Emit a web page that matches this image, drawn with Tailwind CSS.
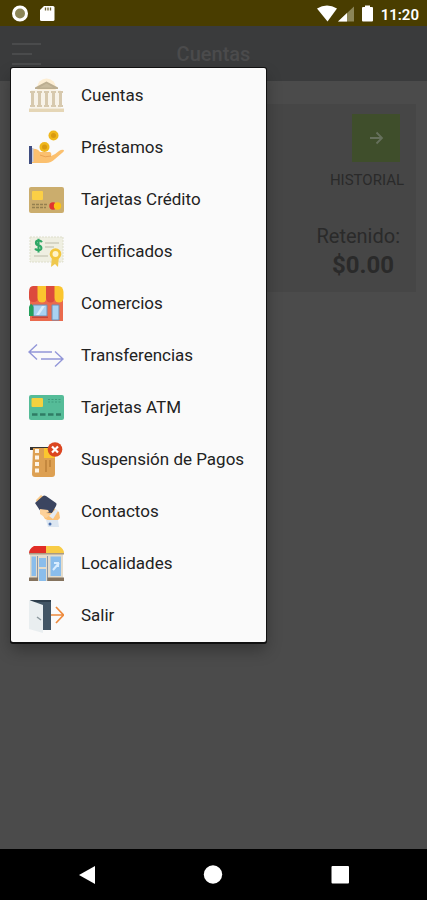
<!DOCTYPE html>
<html lang="es">

<head>
    <meta charset="UTF-8">
    <meta name="viewport" content="width=device-width, initial-scale=1.0">
    <title>Cuentas</title>
    <script src="https://cdn.jsdelivr.net/npm/@tailwindcss/browser@4"></script>
</head>

<body class="min-h-screen flex flex-col bg-[#4b4b4b] font-['Roboto',sans-serif] text-[#2a2a2a]">
    <!-- Status bar -->
    <div class="flex items-center justify-between h-[26px] px-2 bg-[#493d00] text-white">
        <div class="flex items-center gap-2 pl-1">
            <svg class="size-5" viewBox="0 0 20 20" aria-hidden="true">
                <circle cx="8" cy="10.500" r="6.500" fill="#8b8558" stroke="#fff" stroke-width="3" />
            </svg>
            <svg class="size-4" viewBox="0 0 16 16" aria-hidden="true">
                <path d="M4 1h9a1.500 1.500 0 0 1 1.500 1.500v12A1.500 1.500 0 0 1 13 16H1.500A1.500 1.500 0 0 1 0 14.500V5z" fill="#fff" />
                <path d="M5.500 2.500v3M8 2.500v3M10.500 2.500v3" stroke="#6b6130" stroke-width="1.300" />
            </svg>
        </div>
        <div class="flex items-center">
            <svg class="w-[60px] h-5" viewBox="0 0 60 20" aria-hidden="true">
                <path d="M0 5.500Q10-.5 20 5.500L10.500 18.500z" fill="#fff" />
                <path d="M37 3.500v15H21z" fill="#8b8558" />
                <path d="M30 10v8.500h-9z" fill="#fff" />
                <path d="M48 2.500h5v1.500h2a1 1 0 0 1 1 1v12.500a1 1 0 0 1-1 1h-9a1 1 0 0 1-1-1V5a1 1 0 0 1 1-1h2z" fill="#fff" />
            </svg>
            <span class="pl-1 pt-1 text-[15px] font-semibold">11:20</span>
        </div>
    </div>

    <div class="relative flex-1 flex flex-col">
        <!-- Title bar -->
        <header class="grid grid-cols-[1fr_auto_1fr] items-center h-[55px] px-3 bg-[#3a3b3c]">
            <button type="button" aria-label="Menú" class="justify-self-start">
                <svg class="w-[30px] h-6" viewBox="0 0 30 24" fill="none" stroke="#4a4b4c" stroke-width="2">
                    <path d="M0 2h29M0 12h20M0 22h29" />
                </svg>
            </button>
            <h1 class="text-xl font-medium text-[#4b4b4c]">Cuentas</h1>
        </header>

        <!-- Account card -->
        <main class="flex-1 pt-[23px] px-[11px]">
            <section class="flex flex-col items-end h-[188px] pt-[10px] px-3 bg-[#464646]">
                <button type="button" class="flex flex-col items-end text-[15px] leading-5">
                    <span class="flex items-center justify-center size-12 mr-1 mb-2 bg-[#3f4e2b]">
                        <svg class="size-4" viewBox="0 0 16 16" fill="none" stroke="#66705c" stroke-width="1.800" aria-hidden="true">
                            <path d="M2 8h12M8.500 2.500 14 8l-5.500 5.500" />
                        </svg>
                    </span>
                    HISTORIAL
                </button>
                <p class="pt-[34px] pr-1 text-xl leading-6">Retenido:</p>
                <p class="pt-px pr-[10px] text-2xl leading-8 font-bold">$0.00</p>
            </section>
        </main>

        <!-- Drop-down menu -->
        <nav class="absolute top-[42px] left-[11px] w-[255px] rounded-xs bg-[#fafafa] text-[#222] text-[17px] shadow-[0_0_0_1px_#111,0_1px_0_1px_#111,0_8px_16px_rgba(0,0,0,0.3)]">
            <ul class="pt-[2px]">
                <li>
                    <a href="#cuentas" class="flex items-center gap-[17px] h-[52px] pl-[17px]">
                        <svg class="size-9" viewBox="0 0 36 36" aria-hidden="true">
                            <circle cx="18.500" cy="10" r="9.500" fill="#fdeed4" />
                            <path d="M3 12h30v18H3z" fill="#f8f3e9" />
                            <path d="M18.500 3.500 7 9.500V11h23V9.500z" fill="#bcae91" />
                            <path d="m18.500 5.500-7 4h14z" fill="#c9bb9e" />
                            <g fill="#d7c9ae">
                                <path d="M2 13h5v2H2zM9 13h5v2H9zM16 13h5v2h-5zM23 13h5v2h-5zM30 13h5v2h-5z" />
                                <path d="M3 15h3v12H3zM10 15h3v12h-3zM17 15h3v12h-3zM24 15h3v12h-3zM31 15h3v12h-3z" />
                                <path d="M2 27h5v2H2zM9 27h5v2H9zM16 27h5v2h-5zM23 27h5v2h-5zM30 27h5v2h-5z" />
                            </g>
                            <path d="M1 30.500h35V34H1z" fill="#e5d6b6" />
                        </svg>
                        Cuentas
                    </a>
                </li>
                <li>
                    <a href="#prestamos" class="flex items-center gap-[17px] h-[52px] pl-[17px]">
                        <svg class="size-9" viewBox="0 0 36 36" aria-hidden="true">
                            <circle cx="25.500" cy="5.500" r="5" fill="#efb71b" />
                            <circle cx="25.500" cy="5.500" r="2.500" fill="#d99a10" />
                            <circle cx="16.500" cy="17" r="5" fill="#efb71b" />
                            <circle cx="16.500" cy="17" r="2.500" fill="#d99a10" />
                            <path d="M4 19q5-1 8 3h10q2 1 1 4 5-2 8-5 3-2 5-1 0 2-2 3l-7 6q-4 4-9 4H4z" fill="#fbc06f" />
                            <path d="M12 25q5 3 11 1" fill="none" stroke="#eaa354" />
                            <path d="M1 16h3v18H1z" fill="#3f4d80" />
                            <path d="M4 18h1.500v14H4z" fill="#c5cbe0" />
                        </svg>
                        Préstamos
                    </a>
                </li>
                <li>
                    <a href="#credito" class="flex items-center gap-[17px] h-[52px] pl-[17px]">
                        <svg class="size-9" viewBox="0 0 36 36" aria-hidden="true">
                            <rect x="1" y="5" width="35" height="26" rx="2" fill="#cbad6d" />
                            <rect x="4" y="9" width="11" height="9" rx="1" fill="#fbcf46" />
                            <path d="M4 22.500h15M4 25.500h14" stroke="#94804f" stroke-width="1.500" stroke-dasharray="3 1" />
                            <circle cx="25" cy="24" r="3.700" fill="#e0342f" />
                            <circle cx="29.500" cy="24" r="3.700" fill="#fbc317" />
                        </svg>
                        Tarjetas Crédito
                    </a>
                </li>
                <li>
                    <a href="#certificados" class="flex items-center gap-[17px] h-[52px] pl-[17px]">
                        <svg class="size-9" viewBox="0 0 36 36" aria-hidden="true">
                            <rect x="2" y="3" width="33" height="25" fill="#efefe2" stroke="#dedecb" stroke-dasharray="2 1" />
                            <path d="M17 9h14M17 13h9M6 22h14" stroke="#d5d5c5" stroke-width="2" />
                            <path d="M14 8.500q-1-2-4-2c-4 0-4 5 0 5.500s5 6 0 6q-3 0-4-2M10 4.500v16" transform="translate(2 1) scale(.85)" fill="none" stroke="#2fa866" stroke-width="2.500" />
                            <path d="m24 22-1 11 4-3 3 3 1-11z" fill="#efc84e" />
                            <circle cx="27.500" cy="20" r="5.800" fill="#f3c63d" />
                            <circle cx="27.500" cy="20" r="3" fill="#fff3c9" />
                        </svg>
                        Certificados
                    </a>
                </li>
                <li>
                    <a href="#comercios" class="flex items-center gap-[17px] h-[52px] pl-[17px]">
                        <svg class="size-9" viewBox="0 0 36 36" aria-hidden="true">
                            <path d="M2 12h33v23H2z" fill="#ea6a4d" />
                            <path d="M5 0h5v12q0 4-4.500 4T1 12V6q0-6 4-6z" fill="#dc4b3d" />
                            <path d="M9.500 0h9v12a4.500 4.500 0 0 1-9 0z" fill="#fbc52e" />
                            <path d="M18 0h9v12a4.500 4.500 0 0 1-9 0z" fill="#dc4b3d" />
                            <path d="M26.500 0h4Q35 0 35.500 6v6a4.500 4.500 0 0 1-9 0z" fill="#fbc52e" />
                            <path d="M5 19h14v11H5zM24 19h7v15h-7z" fill="#a9d2f1" stroke="#6e8fb5" />
                            <path d="m8 29 6-9h3l-6 9z" fill="#d8ecfb" />
                            <path d="M1 21q2-6 4.500 0v9H1z" fill="#25a05c" />
                            <path d="M4 30.500h16V32H4z" fill="#c74537" />
                        </svg>
                        Comercios
                    </a>
                </li>
                <li>
                    <a href="#transferencias" class="flex items-center gap-[17px] h-[52px] pl-[17px]">
                        <svg class="size-9" viewBox="0 0 36 36" fill="none" stroke="#9296d8" stroke-width="1.400" aria-hidden="true">
                            <path d="M24 14H1M9 6.500 1 14l8 7.500M13 21h22M27 13.500l8 7.500-8 7.500" />
                        </svg>
                        Transferencias
                    </a>
                </li>
                <li>
                    <a href="#atm" class="flex items-center gap-[17px] h-[52px] pl-[17px]">
                        <svg class="size-9" viewBox="0 0 36 36" aria-hidden="true">
                            <rect x="1" y="5" width="35" height="25" rx="2" fill="#55bc98" />
                            <rect x="3.500" y="8" width="11.500" height="9" rx="1" fill="#f5d13e" />
                            <path d="M20 9.500h13M20 12h13" stroke="#3e9b7c" stroke-dasharray="2 1.500" />
                            <path d="M4 24.500h5.500M12 24.500h5.500M20 24.500h5.500M28 24.500h5" stroke="#2f7c64" stroke-width="2.500" />
                        </svg>
                        Tarjetas ATM
                    </a>
                </li>
                <li>
                    <a href="#suspension" class="flex items-center gap-[17px] h-[52px] pl-[17px]">
                        <svg class="size-9" viewBox="0 0 36 36" aria-hidden="true">
                            <path d="M2 5h22v3H2z" fill="#333" />
                            <path d="M5 6h22v26q0 3-3 3H7q-3 0-3-3z" fill="#dda052" />
                            <path d="M16 6h11v10H16z" fill="#fbc62f" />
                            <path d="M7 7h4v4H7zM7 13.500h4v4H7zM7 20h4v4H7zM7 26.500h4v4H7z" fill="#fdf4e6" />
                            <path d="M18 18v12M22 18v7" stroke="#b87c35" stroke-width="1.300" />
                            <circle cx="27" cy="7.500" r="7.300" fill="#db4621" />
                            <path d="m24 4.500 6 6m0-6-6 6" stroke="#fff" stroke-width="2.200" />
                        </svg>
                        Suspensión de Pagos
                    </a>
                </li>
                <li>
                    <a href="#contactos" class="flex items-center gap-[17px] h-[52px] pl-[17px]">
                        <svg class="size-9" viewBox="0 0 36 36" aria-hidden="true">
                            <path d="m8 6 5-5 4 3-7 8z" fill="#fbc985" />
                            <path d="m12 16 12-3 7 5 1 6-5 5-10-4z" fill="#fbc27a" />
                            <path d="m7 9 8-7q1-1 3 0l10 7q1 1 0 3l-4 7-11-1z" fill="#3b4560" />
                            <path d="m12 15 8 1 1 2-3 1 4 2-4 3-6-4z" fill="#fdd19a" />
                            <path d="m21 22 7-7 2 2-5 8z" fill="#e3e9f1" />
                            <path d="M18 26h12l1 7H20z" fill="#dce6f1" />
                            <circle cx="22" cy="30" r="1.500" fill="#4a6fae" />
                        </svg>
                        Contactos
                    </a>
                </li>
                <li>
                    <a href="#localidades" class="flex items-center gap-[17px] h-[52px] pl-[17px]">
                        <svg class="size-9" viewBox="0 0 36 36" aria-hidden="true">
                            <path d="M2 7h33v28H2z" fill="#e4dccb" />
                            <path d="M6 0h12v7H1q0-4 5-7z" fill="#e12d26" />
                            <path d="M18 0h13q5 3 5 7H18z" fill="#f8cc46" />
                            <path d="M1 7h35v1.500H1z" fill="#a99a84" />
                            <path d="M3.500 10.500H8V30H3.500zM11 12h7v9h-7zM11 23h7v12h-7zM22.500 10.500H33V30H22.500z" fill="#8abdeb" />
                            <path d="M9.500 10v25M19.500 10v25" stroke="#8b97a8" />
                            <path d="m25 24 6-7m-5 0h4v4" fill="none" stroke="#d8edff" stroke-width="2" />
                            <path d="M1 31.500h9V35H1zM19.500 31.500H36V35H19.500z" fill="#85735e" />
                        </svg>
                        Localidades
                    </a>
                </li>
                <li>
                    <a href="#salir" class="flex items-center gap-[17px] h-[52px] pl-[17px]">
                        <svg class="size-9" viewBox="0 0 36 36" aria-hidden="true">
                            <path d="M2 2h21v30H13z" fill="#425565" />
                            <path d="M2 2h21v2H4z" fill="#2e3e4c" />
                            <path d="m1 2 14 5v28L1 31z" fill="#e9eef0" />
                            <path d="m9 19 4 3" stroke="#8d999f" stroke-width="1.500" />
                            <path d="M23 17h12M28 9l7.500 8-7.500 8" fill="none" stroke="#ee8a3c" stroke-width="1.700" />
                        </svg>
                        Salir
                    </a>
                </li>
            </ul>
        </nav>
    </div>

    <!-- System navigation -->
    <footer class="grid grid-cols-3 items-center h-[51px] px-6 bg-black text-white">
        <button type="button" aria-label="Atrás" class="justify-self-center">
            <svg class="size-5" viewBox="0 0 20 20" fill="currentColor">
                <path d="M18 1v18L2 10z" />
            </svg>
        </button>
        <button type="button" aria-label="Inicio" class="justify-self-center">
            <svg class="size-5" viewBox="0 0 20 20" fill="currentColor">
                <circle cx="10" cy="9.500" r="9.200" />
            </svg>
        </button>
        <button type="button" aria-label="Recientes" class="justify-self-center">
            <svg class="size-5" viewBox="0 0 20 20" fill="currentColor">
                <rect x="1.500" y="1" width="17.500" height="17.500" rx="1" />
            </svg>
        </button>
    </footer>
</body>

</html>
